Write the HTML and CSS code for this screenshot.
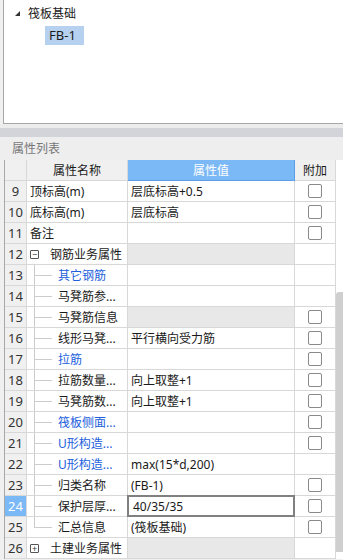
FILE: index.html
```html
<!DOCTYPE html>
<html lang="zh-CN">
<head>
    <meta charset="UTF-8">
    <title>属性列表</title>
    <link rel="stylesheet" href="styles.css">
</head>
<body>
    <div class="tree-panel">
        <div class="tree-node">
            <span class="tri"></span>
            <span>筏板基础</span>
        </div>
        <div class="tree-leaf"><span class="leaf-sel">FB-1</span></div>
    </div>
    <div class="gap"></div>
    <div class="band"></div>
    <div class="panel-title">属性列表</div>

    <div class="grid-wrap">
        <div class="grid">
            <div class="hd num"></div>
            <div class="hd">属性名称</div>
            <div class="hd hd-active">属性值</div>
            <div class="hd">附加</div>

            <div class="num">9</div>
            <div class="name">顶标高(m)</div>
            <div class="val">层底标高+0.5</div>
            <div class="add"><span class="cb"></span></div>

            <div class="num">10</div>
            <div class="name">底标高(m)</div>
            <div class="val">层底标高</div>
            <div class="add"><span class="cb"></span></div>

            <div class="num">11</div>
            <div class="name">备注</div>
            <div class="val"></div>
            <div class="add"><span class="cb"></span></div>

            <div class="num">12</div>
            <div class="name group"><span class="toggle">−</span>钢筋业务属性</div>
            <div class="val shade"></div>
            <div class="add"></div>

            <div class="num">13</div>
            <div class="name child link"><span class="guide"></span>其它钢筋</div>
            <div class="val"></div>
            <div class="add"></div>

            <div class="num">14</div>
            <div class="name child"><span class="guide"></span>马凳筋参...</div>
            <div class="val"></div>
            <div class="add"></div>

            <div class="num">15</div>
            <div class="name child"><span class="guide"></span>马凳筋信息</div>
            <div class="val shade"></div>
            <div class="add"><span class="cb"></span></div>

            <div class="num">16</div>
            <div class="name child"><span class="guide"></span>线形马凳...</div>
            <div class="val">平行横向受力筋</div>
            <div class="add"><span class="cb"></span></div>

            <div class="num">17</div>
            <div class="name child link"><span class="guide"></span>拉筋</div>
            <div class="val"></div>
            <div class="add"><span class="cb"></span></div>

            <div class="num">18</div>
            <div class="name child"><span class="guide"></span>拉筋数量...</div>
            <div class="val">向上取整+1</div>
            <div class="add"><span class="cb"></span></div>

            <div class="num">19</div>
            <div class="name child"><span class="guide"></span>马凳筋数...</div>
            <div class="val">向上取整+1</div>
            <div class="add"><span class="cb"></span></div>

            <div class="num">20</div>
            <div class="name child link"><span class="guide"></span>筏板侧面...</div>
            <div class="val"></div>
            <div class="add"><span class="cb"></span></div>

            <div class="num">21</div>
            <div class="name child link"><span class="guide"></span>U形构造...</div>
            <div class="val"></div>
            <div class="add"><span class="cb"></span></div>

            <div class="num">22</div>
            <div class="name child link"><span class="guide"></span>U形构造...</div>
            <div class="val">max(15*d,200)</div>
            <div class="add"></div>

            <div class="num">23</div>
            <div class="name child"><span class="guide"></span>归类名称</div>
            <div class="val">(FB-1)</div>
            <div class="add"><span class="cb"></span></div>

            <div class="num num-sel">24</div>
            <div class="name child"><span class="guide"></span>保护层厚...</div>
            <div class="val editing">40/35/35</div>
            <div class="add"><span class="cb"></span></div>

            <div class="num">25</div>
            <div class="name child"><span class="guide last"></span>汇总信息</div>
            <div class="val">(筏板基础)</div>
            <div class="add"><span class="cb"></span></div>

            <div class="num">26</div>
            <div class="name group"><span class="toggle">+</span>土建业务属性</div>
            <div class="val shade"></div>
            <div class="add"></div>
        </div>
        <div class="scrollbar"><div class="thumb"></div></div>
    </div>
</body>
</html>
```

FILE: styles.css
```css
body {
    margin: 0;
    background: #f0f0f0;
    font-family: "Noto Sans", "Noto Sans CJK SC", sans-serif;
    font-size: 12px;
    color: #1a1a1a;
    overflow: hidden;
}
.tree-panel {
    margin-left: 3px;
    height: 123px;
    background: #fff;
    border-left: 1px solid #a8a8a8;
    border-bottom: 1px solid #a8a8a8;
}
.tree-node {
    display: flex;
    align-items: center;
    height: 20px;
    padding: 3px 0 0 11px;
}
.tri {
    width: 0;
    height: 0;
    border-left: 5px solid transparent;
    border-bottom: 5px solid #333;
    margin-right: 8px;
}
.tree-leaf {
    padding: 3px 0 0 41px;
}
.leaf-sel {
    display: inline-block;
    background: #b6d1ef;
    height: 19px;
    line-height: 19px;
    padding: 0 8px 0 4px;
    font-size: 13px;
}
.gap {
    height: 4px;
    background: #ececec;
}
.band {
    height: 9px;
    background: #d3d4d9;
}
.panel-title {
    height: 23px;
    line-height: 23px;
    padding-left: 12px;
    color: #777;
    background: #eeeeee;
}
.grid-wrap {
    display: flex;
    margin-left: 4px;
    border-left: 1px solid #a8a8a8;
    background: #fff;
}
.grid {
    display: grid;
    grid-template-columns: 22px 101px 167px 41px;
    grid-auto-rows: 21px;
}
.grid > div {
    border-right: 1px solid #d8d8d8;
    border-bottom: 1px solid #d8d8d8;
    display: flex;
    align-items: center;
    white-space: nowrap;
    overflow: hidden;
}
.hd {
    background: #f0f0f0;
    justify-content: center;
}
.grid > .hd-active {
    background: #7bb8f6;
    color: #fff;
    border-color: #5c9ee6;
}
.num {
    background: #f0f0f0;
    justify-content: center;
    font-size: 13px;
    color: #333;
}
.num-sel {
    background: #7bb8f6;
    color: #fff;
}
.name {
    padding-left: 3px;
}
.name.child {
    padding-left: 7px;
}
.link {
    color: #2160dc;
}
.guide {
    align-self: stretch;
    width: 18px;
    margin-right: 6px;
    flex-shrink: 0;
    background:
        linear-gradient(#cccccc, #cccccc) left top / 1px 100% no-repeat,
        linear-gradient(#cccccc, #cccccc) left center / 100% 1px no-repeat;
}
.guide.last {
    background:
        linear-gradient(#cccccc, #cccccc) left top / 1px 50% no-repeat,
        linear-gradient(#cccccc, #cccccc) left center / 100% 1px no-repeat;
}
.toggle {
    width: 7px;
    height: 7px;
    border: 1px solid #555;
    border-radius: 1px;
    margin-right: 11px;
    font-size: 9px;
    line-height: 7px;
    text-align: center;
    color: #333;
    flex-shrink: 0;
}
.val {
    padding-left: 3px;
}
.grid > .shade {
    background: #e8e8e8;
}
.grid > .editing {
    border: 2px solid #808080;
    margin: -1px 0 0 -1px;
    padding-left: 4px;
    background: #fff;
}
.add {
    justify-content: center;
}
.cb {
    width: 12px;
    height: 12px;
    border: 1px solid #8a8a8a;
    border-radius: 2px;
    background: #fff;
}
.scrollbar {
    width: 7px;
    padding-top: 132px;
}
.thumb {
    height: 260px;
    background: #cfcfcf;
    border-radius: 3px 0 0 0;
}
```
